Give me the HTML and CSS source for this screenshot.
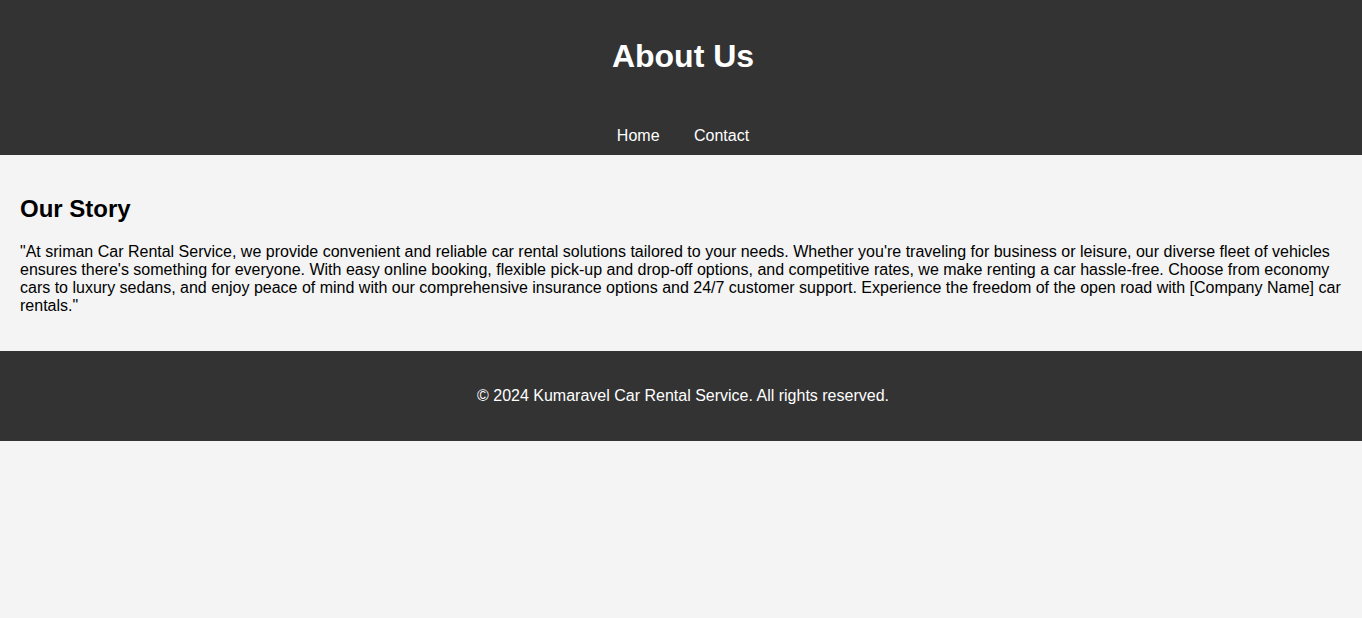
FILE: index.html
```html
<!DOCTYPE html>
<html lang="en">
<head>
<meta charset="UTF-8">
<title>About Us</title>
<link rel="stylesheet" href="styles.css">
</head>
<body>
<header class="site-header">
  <h1 class="title">About Us</h1>
</header>
<nav class="site-nav">
  <a href="#" class="nav-link">Home</a>
  <a href="#" class="nav-link">Contact</a>
</nav>
<main class="content">
  <section class="story">
    <h2 class="story-title">Our Story</h2>
    <p class="story-text">"At sriman Car Rental Service, we provide convenient and reliable car rental solutions tailored to your needs. Whether you're traveling for business or leisure, our diverse fleet of vehicles ensures there's something for everyone. With easy online booking, flexible pick-up and drop-off options, and competitive rates, we make renting a car hassle-free. Choose from economy cars to luxury sedans, and enjoy peace of mind with our comprehensive insurance options and 24/7 customer support. Experience the freedom of the open road with [Company Name] car rentals."</p>
  </section>
</main>
<footer class="site-footer">
  <p class="copy">&copy; 2024 Kumaravel Car Rental Service. All rights reserved.</p>
</footer>
</body>
</html>
```

FILE: styles.css
```css
body {
  margin: 0;
  font-family: Arial, "Liberation Sans", sans-serif;
  background-color: #f4f4f4;
  color: #000;
}

.site-header {
  background-color: #333;
  color: #fff;
  text-align: center;
  padding: 17px 0 15px 4px;
}

.title {
  font-size: 32px;
  margin: 21.44px 0;
}

.site-nav {
  background-color: #333;
  text-align: center;
  padding: 15px 0 10px 4px;
}

.nav-link {
  color: #fff;
  text-decoration: none;
  margin: 0 15px;
}

.content {
  padding: 20px;
}

.story-title {
  font-size: 24px;
  margin: 19.92px 0;
}

.story-text {
  margin: 16px 0;
}

.site-footer {
  background-color: #333;
  color: #fff;
  text-align: center;
  padding: 20px 20px 20px 24px;
}

.copy {
  margin: 16px 0;
}
```
